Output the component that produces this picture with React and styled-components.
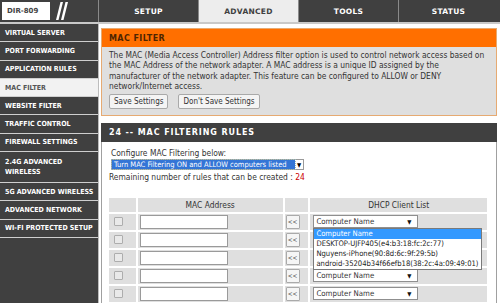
import React from 'react';
import styled, { createGlobalStyle } from 'styled-components';

const Global = createGlobalStyle`
  html, body { margin: 0; padding: 0; background: #fff; }
  body {
    width: 500px; height: 303px; overflow: hidden;
    font-family: "DejaVu Sans Condensed", "DejaVu Sans", sans-serif;
    color: #333;
  }
  * { box-sizing: border-box; }
`;

const Page = styled.div`
  width: 500px;
  height: 303px;
  display: flex;
  flex-direction: column;
  overflow: hidden;
  background: #fff;
`;

const TopBar = styled.div`
  display: flex;
  height: 24px;
  flex-shrink: 0;
  background: #404040;
  border-bottom: 2px solid #c9c9c9;
`;

const Brand = styled.div`
  width: 98px;
  display: flex;
  align-items: center;
  padding-left: 2px;
`;

const Model = styled.div`
  background: #fff;
  height: 18px;
  width: 48px;
  display: flex;
  align-items: center;
  padding-left: 5px;
  font: bold 7px "DejaVu Sans", sans-serif;
  color: #444;
`;

const Tabs = styled.div`
  flex: 1;
  display: flex;
`;

const Tab = styled.div`
  width: 100px;
  display: flex;
  align-items: center;
  justify-content: center;
  border-left: 1px solid #8a8a8a;
  font: bold 7.5px "DejaVu Sans", sans-serif;
  letter-spacing: 0.3px;
  color: ${p => (p.$active ? '#404040' : '#fff')};
  background: ${p => (p.$active ? '#ededed' : 'transparent')};
`;

const Main = styled.div`
  flex: 1;
  display: flex;
  min-height: 0;
`;

const Sidebar = styled.div`
  width: 99px;
  flex-shrink: 0;
  background: #404040;
  border-right: 1px solid #bdbdbd;
  display: flex;
  flex-direction: column;
`;

const NavItem = styled.div`
  min-height: 18.3px;
  padding: ${p => (p.$tall ? '5px' : '3px')} 4px ${p => (p.$tall ? '5px' : '3px')} 5px;
  display: flex;
  align-items: center;
  border-bottom: 1px solid #cfcfcf;
  font: bold 7px "DejaVu Sans Condensed", "DejaVu Sans", sans-serif;
  line-height: 10px;
  color: ${p => (p.$active ? '#555' : '#fff')};
  background: ${p => (p.$active ? '#f2f2f2' : 'transparent')};
`;

const Content = styled.div`
  flex: 1;
  padding: 4px 3px 0 2px;
  display: flex;
  flex-direction: column;
  gap: 7px;
  min-width: 0;
`;

const OrangeBox = styled.div`
  border: 1px solid #e6aa72;
  background: #dfdfdf;
`;

const OrangeHead = styled.div`
  height: 18px;
  background: #ff6f00;
  display: flex;
  align-items: center;
  padding-left: 7px;
  font: bold 8px "DejaVu Sans", sans-serif;
  letter-spacing: 0.4px;
  color: #4f2500;
`;

const OrangeBody = styled.div`
  padding: 3px 7px 6px;
  font-size: 8.4px;
  line-height: 10.4px;
  color: #333;
`;

const ButtonRow = styled.div`
  display: flex;
  gap: 10px;
  margin-top: 2px;
`;

const Btn = styled.button`
  height: 15px;
  padding: 0 4px;
  font: 8px "DejaVu Sans Condensed", "DejaVu Sans", sans-serif;
  color: #333;
  background: #f4f4f4;
  border: 1px solid #a9a9a9;
  border-radius: 2px;
`;

const Section = styled.div`
  flex: 1;
  display: flex;
  flex-direction: column;
`;

const DarkHead = styled.div`
  height: 19px;
  flex-shrink: 0;
  background: #404040;
  display: flex;
  align-items: center;
  padding-left: 8px;
  font: bold 8px "DejaVu Sans", sans-serif;
  letter-spacing: 0.9px;
  color: #fff;
`;

const SectionBody = styled.div`
  flex: 1;
  border-left: 1px solid #a0a0a0;
  border-right: 1px solid #a0a0a0;
  padding: 6px 7px 0;
  font-size: 8.4px;
  line-height: 10px;
  color: #333;
`;

const Line = styled.div`
  margin-left: ${p => p.$indent || 0}px;
`;

const Red = styled.span`
  color: #c00;
`;

const FakeSelect = styled.div`
  display: flex;
  width: 193px;
  height: 11px;
  margin: 1px 0 2px 2px;
  border: 1px solid #9a9a9a;
  background: #fff;
  font-size: 7.5px;
  line-height: 9px;
`;

const SelectValue = styled.div`
  flex: 1;
  background: #3375d6;
  color: #fff;
  padding-left: 2px;
  outline: 1px dotted #9bb;
  white-space: nowrap;
  overflow: hidden;
`;

const Arrow = styled.div`
  width: 8px;
  display: flex;
  align-items: center;
  justify-content: center;
  font-size: 6px;
  color: #000;
`;

const Table = styled.table`
  border-spacing: 2px;
  margin: 14px 0 0 -2px;
  font-size: 8.4px;
`;

const Th = styled.th`
  height: 14px;
  padding: 0;
  background: #dfdfdf;
  font-weight: normal;
  color: #333;
  text-align: center;
`;

const Td = styled.td`
  height: 16px;
  padding: 0;
  background: #dfdfdf;
  vertical-align: middle;
  position: relative;
`;

const Check = styled.div`
  width: 9px;
  height: 9px;
  margin-left: 5px;
  border: 1px solid #adadad;
  border-radius: 1px;
  background: #e9e9e9;
`;

const TextInput = styled.div`
  width: 88px;
  height: 14px;
  margin-left: 2px;
  border: 1px solid #9a9a9a;
  background: #fff;
`;

const CopyBtn = styled.div`
  width: 14px;
  height: 14px;
  margin-left: 1px;
  border: 1px solid #aaa;
  border-radius: 1px;
  background: #f5f5f5;
  font-size: 6.5px;
  display: flex;
  align-items: center;
  justify-content: center;
  color: #444;
`;

const ClientSelect = styled.div`
  width: 105px;
  height: 13px;
  margin-left: 3px;
  border: 1px solid #8f8f8f;
  background: #fff;
  display: flex;
  align-items: center;
  justify-content: space-between;
  padding: 0 6px 0 2px;
  font-size: 7.8px;
  color: #333;
`;

const SmallArrow = styled.span`
  font-size: 6px;
  color: #111;
`;

const DropList = styled.div`
  position: absolute;
  left: 3px;
  top: 14px;
  width: 169px;
  background: #fff;
  border: 1px solid #7a7a7a;
  z-index: 2;
  font-size: 7.6px;
`;

const Option = styled.div`
  height: 10px;
  line-height: 10px;
  padding-left: 2px;
  white-space: nowrap;
  color: ${p => (p.$sel ? '#fff' : '#222')};
  background: ${p => (p.$sel ? '#3399ff' : 'transparent')};
`;

const navItems = [
  'VIRTUAL SERVER',
  'PORT FORWARDING',
  'APPLICATION RULES',
  'MAC FILTER',
  'WEBSITE FILTER',
  'TRAFFIC CONTROL',
  'FIREWALL SETTINGS',
  '2.4G ADVANCED WIRELESS',
  '5G ADVANCED WIRELESS',
  'ADVANCED NETWORK',
  'WI-FI PROTECTED SETUP',
];

const options = [
  'Computer Name',
  'DESKTOP-UJFP405(e4:b3:18:fc:2c:77)',
  'Nguyens-iPhone(90:8d:6c:9f:29:5b)',
  'android-35204b34f66efb18(38:2c:4a:09:49:01)',
];

function Slashes() {
  return (
    <svg width="16" height="20" viewBox="0 0 16 20" style={{ marginLeft: 2 }}>
      <polygon points="4,19 6.5,19 11,1 8.5,1" fill="#fff" />
      <polygon points="9,19 11.5,19 16,1 13.5,1" fill="#fff" />
    </svg>
  );
}

export default function App() {
  const rows = [0, 1, 2, 3, 4];
  return (
    <Page>
      <Global />
      <TopBar>
        <Brand>
          <Model>DIR-809</Model>
          <Slashes />
        </Brand>
        <Tabs>
          <Tab>SETUP</Tab>
          <Tab $active>ADVANCED</Tab>
          <Tab>TOOLS</Tab>
          <Tab>STATUS</Tab>
        </Tabs>
      </TopBar>
      <Main>
        <Sidebar>
          {navItems.map(n => (
            <NavItem key={n} $active={n === 'MAC FILTER'} $tall={n.startsWith('2.4G')}>{n}</NavItem>
          ))}
        </Sidebar>
        <Content>
          <OrangeBox>
            <OrangeHead>MAC FILTER</OrangeHead>
            <OrangeBody>
              The MAC (Media Access Controller) Address filter option is used to control network access based
              on the MAC Address of the network adapter. A MAC address is a unique ID assigned by the
              manufacturer of the network adapter. This feature can be configured to ALLOW or DENY
              network/Internet access.
              <ButtonRow>
                <Btn>Save Settings</Btn>
                <Btn>Don't Save Settings</Btn>
              </ButtonRow>
            </OrangeBody>
          </OrangeBox>
          <Section>
            <DarkHead>24 -- MAC FILTERING RULES</DarkHead>
            <SectionBody>
              <Line $indent={2}>Configure MAC Filtering below:</Line>
              <FakeSelect>
                <SelectValue>Turn MAC Filtering ON and ALLOW computers listed</SelectValue>
                <Arrow>▼</Arrow>
              </FakeSelect>
              <Line>Remaining number of rules that can be created : <Red>24</Red></Line>
              <Table>
                <thead>
                  <tr>
                    <Th style={{ width: 27 }}></Th>
                    <Th style={{ width: 146 }}>MAC Address</Th>
                    <Th style={{ width: 24 }}></Th>
                    <Th style={{ width: 178 }}>DHCP Client List</Th>
                  </tr>
                </thead>
                <tbody>
                  {rows.map(r => (
                    <tr key={r}>
                      <Td><Check /></Td>
                      <Td><TextInput /></Td>
                      <Td><CopyBtn>&lt;&lt;</CopyBtn></Td>
                      <Td>
                        <ClientSelect>
                          <span>Computer Name</span>
                          <SmallArrow>▼</SmallArrow>
                        </ClientSelect>
                        {r === 0 && (
                          <DropList>
                            {options.map((o, i) => (
                              <Option key={o} $sel={i === 0}>{o}</Option>
                            ))}
                          </DropList>
                        )}
                      </Td>
                    </tr>
                  ))}
                </tbody>
              </Table>
            </SectionBody>
          </Section>
        </Content>
      </Main>
    </Page>
  );
}
